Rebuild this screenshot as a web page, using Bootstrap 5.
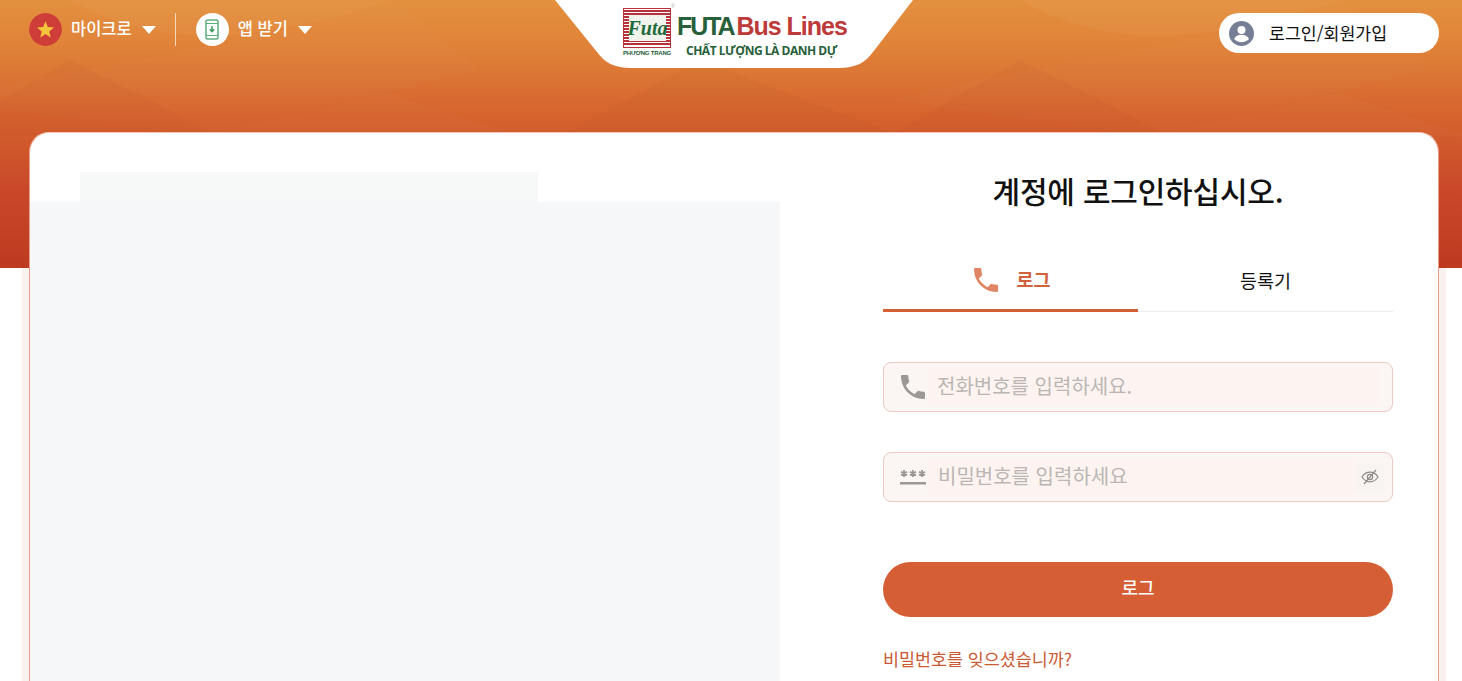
<!doctype html>
<html lang="ko"><head><meta charset="utf-8">
<link href="https://cdn.jsdelivr.net/npm/bootstrap@5.3.0/dist/css/bootstrap.min.css" rel="stylesheet">
<style>
html,body{height:681px;overflow:hidden;background:#fff}
body{font-family:"Noto Sans CJK KR","Noto Sans",sans-serif;color:#111}
.hero{height:268px;background:linear-gradient(180deg,#e3903e 0,#e08339 45px,#d5622d 118px,#c9482a 190px,#bd3a20 268px);position:relative}
.hero-art{position:absolute;inset:0;width:100%;height:136px}
.topbar{position:relative;height:68px}
.side-left{position:absolute;left:29px;top:13px;color:#fff;font-size:16.5px;font-weight:500}
.round-ic{width:33px;height:33px;border-radius:50%;flex:none}
.lbl{margin-left:9px;padding-bottom:3px;line-height:22px}
.caret-w{width:0;height:0;border-left:7.5px solid transparent;border-right:7.5px solid transparent;border-top:8px solid #fff;margin:1px 0 0 10px}
.vline{width:1px;height:33px;background:#f6d8bd;margin:0 20px 0 19px}
.logo-tab{position:absolute;left:555px;top:0;width:358px;height:68px}
.logo-shape{position:absolute;inset:0;width:100%;height:100%}
.logo-mark{position:absolute;left:68px;top:8px;width:48px;height:40px}
.logo-reg{position:absolute;left:116px;top:3px;font:400 5px/6px "Liberation Sans",sans-serif;color:#a9a9a9}
.logo-pt{position:absolute;left:68px;top:49px;width:48px;text-align:center;font:700 6px/8px "Liberation Sans",sans-serif;color:#245c37;white-space:nowrap;letter-spacing:-.2px}
.logo-main{position:absolute;left:122px;top:9px;line-height:34px;font-family:"Liberation Sans",sans-serif;font-weight:700;white-space:nowrap}
.logo-g{color:#27603a;font-size:25px;letter-spacing:-2.1px}
.logo-r{color:#bd3a3a;margin-left:3px;font-size:25px;letter-spacing:-1px}
.logo-sub{position:absolute;left:131px;top:43px;font:700 12px/15px "Open Sans",sans-serif;letter-spacing:-.48px;color:#27603a;white-space:nowrap}
.login-pill{position:absolute;left:1219px;top:13px;width:220px;height:40px;background:#fff;border-radius:20px;font-size:17.3px;color:#111;padding-left:10px}
.login-lbl{margin-left:15px}
.shell{margin:-136px 16px 0 22px;padding:0 7px;height:549px;background:linear-gradient(180deg,transparent 136px,#f8f1ee 136px);position:relative}
.panel{height:549px;background:#fff;border:1px solid #e8a08c;border-top-color:#f2c3b4;border-bottom:0;border-radius:20px 20px 0 0;overflow:hidden}
.art-col{width:750px;flex:none;padding-top:39px}
.ph-a{width:458px;height:30px;margin-left:50px;background:#f7f8f8}
.ph-b{background:#f6f7f9}
.form-col{width:510px;margin-left:103px;padding-top:36px}
.form-title{font-size:30px;line-height:42px;font-weight:500;text-align:center;margin:0;letter-spacing:-.2px}
.tabs-row{margin-top:39px;height:62px}
.tab-a,.tab-b{height:62px;flex:1 1 50%;font-size:18.5px;padding-top:1px}
.tab-a{color:#d0633b;font-weight:700;border-bottom:3px solid #d35f35}
.tab-b{color:#111;font-weight:400;border-bottom:1px solid #ececec;padding-bottom:1px}
.tab-gap{margin-left:14px}
.field{height:50px;border:1px solid #efc9c2;border-radius:8px;background:#fbf5f3;padding:5px 13px}
.field-pw{padding-left:15px}
.field-text{background:#fdf3f0;color:#bab6b3;font-size:20px;line-height:36px;flex:1;padding-left:8px;height:38px}
.field-pw .field-text{padding-left:11px}
.gap-f{margin-top:50px}.gap-g{margin-top:40px}
.eye-box{width:28px;height:28px;background:#f8f4f1;margin-right:-5px}
.cta{display:block;width:100%;height:55px;margin-top:60px;border:0;border-radius:28px;background:#d55e34;color:#fff;font-size:18px;font-weight:500;padding:0 0 4px}
.forgot{display:block;margin-top:28px;color:#c95a32;font-size:17.4px;line-height:28px;text-decoration:none}
</style></head>
<body>
<header class="hero">
<svg class="hero-art" viewBox="0 0 1462 136" aria-hidden="true">
<defs><g id="facet">
<path d="M70 0C140 40 230 55 392 0Z" fill="#fff" fill-opacity=".035"/>
<path d="M-60 100C100 60 280 42 392 0L480 70L200 136Z" fill="#fff" fill-opacity=".015"/>
<path d="M200 136L387 93L520 136Z" fill="#fff" fill-opacity=".025"/>
<path d="M-60 136L70 60L220 136Z" fill="#8a2a10" fill-opacity=".035"/>
<path d="M560 136L700 60L900 136Z" fill="#8a2a10" fill-opacity=".04"/>
</g></defs>
<use href="#facet"/><use href="#facet" x="950"/>
</svg>
<div class="topbar">
<div class="side-left d-flex align-items-center">
<svg class="round-ic" viewBox="0 0 33 33"><circle cx="16.5" cy="16.5" r="16.5" fill="#cf3d38"/><path d="M16.5 8.300l2.300 5.800 6.200.4-4.800 3.900 1.500 6-5.200-3.300-5.200 3.300 1.500-6-4.800-3.900 6.200-.4z" fill="#f5c63c"/></svg>
<span class="lbl">마이크로</span><span class="caret-w"></span>
<span class="vline"></span>
<span class="round-ic bg-white d-flex align-items-center justify-content-center">
<svg width="14" height="21" viewBox="0 0 14 21" fill="none"><rect x="1" y="1" width="12" height="19" rx="1.5" stroke="#5fae7c" stroke-width="1.5"/><path d="M1 4.500h12M1 16.500h12" stroke="#5fae7c"/><path d="M7 7v5M4.800 10.200 7 12.600l2.200-2.400" stroke="#3f9a63" stroke-width="1.500"/></svg>
</span>
<span class="lbl">앱 받기</span><span class="caret-w"></span>
</div>
<div class="logo-tab">
<svg class="logo-shape" viewBox="0 0 358 68"><path d="M0 0H358L318 52C310 63 300 68 284 68H76C60 68 50 63 42 52Z" fill="#fff"/></svg>
<svg class="logo-mark" viewBox="0 0 48 40"><rect x=".5" y=".5" width="47" height="39" fill="#fff" stroke="#b8323c"/><path d="M1 3h46M1 6h46M1 9h46M1 12h46M1 15h46M1 18h46M1 21h46M1 24h46M1 27h46M1 30h46M1 33h46M1 36h46" stroke="#b8323c" stroke-width="1.800"/><rect x="6" y="7" width="37" height="26" fill="#f1f4ec"/><text x="24.500" y="27" text-anchor="middle" font-family="Liberation Serif" font-style="italic" font-weight="700" font-size="20" fill="#1f6b3a">Futa</text></svg>
<div class="logo-reg">®</div>
<div class="logo-pt">PHƯƠNG TRANG</div>
<div class="logo-main"><span class="logo-g">FUTA</span><span class="logo-r">Bus Lines</span></div>
<div class="logo-sub">CHẤT LƯỢNG LÀ DANH DỰ</div>
</div>
<div class="login-pill d-flex align-items-center">
<svg width="25" height="25" viewBox="0 0 25 25"><circle cx="12.5" cy="12.5" r="12.5" fill="#767e95"/><circle cx="12.5" cy="9" r="4" fill="#fff"/><path d="M5 18c1.500-3 4-4.300 7.500-4.300S18.500 15 20 18c-1.800 2-4.500 3.200-7.500 3.200S6.800 20 5 18z" fill="#fff"/></svg>
<span class="login-lbl">로그인/회원가입</span>
</div>
</div>
</header>
<main class="shell">
<div class="panel d-flex">
<div class="art-col d-flex flex-column"><div class="ph-a"></div><div class="ph-b flex-grow-1"></div></div>
<div class="form-col">
<h1 class="form-title">계정에 로그인하십시오.</h1>
<div class="tabs-row d-flex">
<div class="tab-a d-flex align-items-center justify-content-center">
<svg width="32" height="32" viewBox="0 0 24 24"><path fill="#e08564" d="M6.600 10.800c1.400 2.800 3.800 5.100 6.600 6.600l2.200-2.200c.3-.3.700-.4 1-.2 1.100.4 2.300.6 3.600.6.600 0 1 .4 1 1V20c0 .6-.4 1-1 1C10.600 21 3 13.400 3 4c0-.6.400-1 1-1h3.500c.6 0 1 .4 1 1 0 1.300.2 2.500.6 3.600.1.300 0 .7-.2 1z"/></svg>
<span class="tab-gap">로그</span>
</div>
<div class="tab-b d-flex align-items-center justify-content-center">등록기</div>
</div>
<div class="field gap-f d-flex align-items-center">
<svg width="32" height="32" viewBox="0 0 24 24"><path fill="#9c9896" d="M6.600 10.800c1.400 2.800 3.800 5.100 6.600 6.600l2.200-2.200c.3-.3.700-.4 1-.2 1.100.4 2.300.6 3.600.6.600 0 1 .4 1 1V20c0 .6-.4 1-1 1C10.600 21 3 13.400 3 4c0-.6.400-1 1-1h3.500c.6 0 1 .4 1 1 0 1.300.2 2.500.6 3.600.1.300 0 .7-.2 1z"/></svg>
<div class="field-text">전화번호를 입력하세요.</div>
</div>
<div class="field field-pw gap-g d-flex align-items-center">
<svg width="28" height="24" viewBox="0 0 28 24" fill="#9c9896"><rect x="1" y="17" width="26" height="2.500"/><path d="M5 5v7M2 6.700l6 3.600M8 6.700l-6 3.600M14 5v7M11 6.700l6 3.600M17 6.700l-6 3.600M23 5v7M20 6.700l6 3.600M26 6.700l-6 3.600" stroke="#9c9896" stroke-width="1.800"/></svg>
<div class="field-text">비밀번호를 입력하세요</div>
<div class="eye-box d-flex align-items-center justify-content-center">
<svg width="18" height="18" viewBox="0 0 18 18" fill="none" stroke="#8d8a88" stroke-width="1.200"><path d="M1 9c2-3.200 4.700-4.800 8-4.800s6 1.600 8 4.800c-2 3.200-4.700 4.800-8 4.800S3 12.200 1 9z"/><circle cx="9" cy="9" r="2.600"/><path d="M15 2 3 16"/></svg>
</div>
</div>
<button type="button" class="cta">로그</button>
<a href="#" class="forgot">비밀번호를 잊으셨습니까?</a>
</div>
</div>
</main>
<script src="https://cdn.jsdelivr.net/npm/bootstrap@5.3.0/dist/js/bootstrap.bundle.min.js"></script>
</body></html>
